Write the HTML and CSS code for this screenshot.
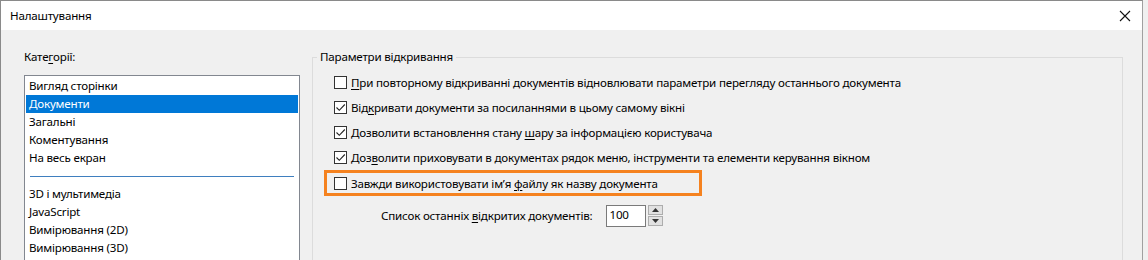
FILE: index.html
```html
<!DOCTYPE html>
<html lang="uk">
<head>
<meta charset="utf-8">
<title>Налаштування</title>
<link rel="stylesheet" href="styles.css">
</head>
<body>
<div class="window">
  <div class="titlebar">
    <span class="title">Налаштування</span>
    <svg class="close" width="12" height="12" viewBox="0 0 12 12"><path d="M1 1 L11 11 M11 1 L1 11" stroke="#111" stroke-width="1.1" fill="none"/></svg>
  </div>
  <div class="content">
    <div class="left">
      <div class="cat-label">Кате<u>г</u>орії:</div>
      <div class="listbox">
        <div class="item">Вигляд сторінки</div>
        <div class="item selected">Документи</div>
        <div class="item">Загальні</div>
        <div class="item">Коментування</div>
        <div class="item">На весь екран</div>
        <div class="sep"></div>
        <div class="item">3D і мультимедіа</div>
        <div class="item">JavaScript</div>
        <div class="item">Вимірювання (2D)</div>
        <div class="item">Вимірювання (3D)</div>
      </div>
    </div>
    <div class="right">
      <fieldset class="group">
        <legend>Параметри відкривання</legend>
        <div class="row"><span class="cb"></span><span><u>П</u>ри повторному відкриванні документів відновлювати параметри перегляду останнього документа</span></div>
        <div class="row"><span class="cb checked"><svg viewBox="0 0 13 13" width="13" height="13"><path d="M2.5 6.5 L5.3 9.3 L10.8 3.5" stroke="#222" stroke-width="1.1" fill="none"/></svg></span><span>Від<u>к</u>ривати документи за посиланнями в цьому самому вікні</span></div>
        <div class="row"><span class="cb checked"><svg viewBox="0 0 13 13" width="13" height="13"><path d="M2.5 6.5 L5.3 9.3 L10.8 3.5" stroke="#222" stroke-width="1.1" fill="none"/></svg></span><span>Дозволити встановлення стану <u>ш</u>ару за інформацією користувача</span></div>
        <div class="row"><span class="cb checked"><svg viewBox="0 0 13 13" width="13" height="13"><path d="M2.5 6.5 L5.3 9.3 L10.8 3.5" stroke="#222" stroke-width="1.1" fill="none"/></svg></span><span>Доз<u>в</u>олити приховувати в документах рядок меню, інструменти та елементи керування вікном</span></div>
        <div class="row highlight"><span class="cb"></span><span>Завжди використовувати ім’я <u>ф</u>айлу як назву документа</span></div>
        <div class="spin-row">
          <span class="spin-label">Список останніх <u>в</u>ідкритих документів:</span>
          <span class="input">100</span>
          <span class="spinner">
            <span class="sbtn"><svg width="7" height="4" viewBox="0 0 7 4"><path d="M0 4 L3.5 0 L7 4 Z" fill="#333"/></svg></span>
            <span class="sbtn"><svg width="7" height="4" viewBox="0 0 7 4"><path d="M0 0 L7 0 L3.5 4 Z" fill="#333"/></svg></span>
          </span>
        </div>
      </fieldset>
    </div>
  </div>
</div>
</body>
</html>
```
FILE: styles.css
```css
html, body {
  margin: 0;
  padding: 0;
  background: #f0f0f0;
}
body {
  font-family: "Noto Sans", "Liberation Sans", sans-serif;
  font-size: 11.6px;
  letter-spacing: -0.2px;
  color: #000;
  width: 1148px;
  height: 260px;
  overflow: hidden;
}
u { text-decoration-thickness: 1px; text-underline-offset: 2px; }
.window {
  width: 1143px;
  height: 260px;
  border-left: 1px solid #8a8a8a;
  border-top: 1px solid #8a8a8a;
  border-right: 1px solid #a0a0a0;
  background: #f0f0f0;
  box-sizing: border-box;
  overflow: hidden;
}
.titlebar {
  height: 29px;
  background: #fff;
  display: flex;
  align-items: center;
  justify-content: space-between;
  padding: 0 11px 0 9px;
}
.close { display: block; }
.content {
  display: flex;
  height: 230px;
  overflow: hidden;
}
.left {
  margin-left: 23px;
  width: 276px;
}
.cat-label {
  margin-top: 19px;
  height: 16px;
  line-height: 16px;
}
.listbox {
  margin-top: 10px;
  border: 1px solid #828790;
  border-bottom: none;
  background: #fff;
  height: 185px;
  box-sizing: border-box;
  padding: 1px 1px 0;
  overflow: hidden;
}
.item {
  height: 18px;
  line-height: 18px;
  padding-left: 3px;
  white-space: nowrap;
}
.item.selected {
  background: #0078d7;
  color: #fff;
}
.sep {
  height: 18px;
  display: flex;
  align-items: center;
  padding: 0 4px;
}
.sep::after {
  content: "";
  flex: 1;
  border-top: 1px solid #3f7fbf;
}
.right {
  margin-left: 12px;
}
.group {
  margin: 19px 0 0 0;
  padding: 5px 0 0 21px;
  width: 811px;
  height: 215px;
  box-sizing: border-box;
  border: 1px solid #dcdcdc;
  border-bottom: none;
}
.group legend {
  padding: 0 3px;
  margin-left: -17px;
  line-height: 16px;
}
.row {
  display: flex;
  align-items: center;
  height: 25px;
  white-space: nowrap;
}
.cb {
  width: 13px;
  height: 13px;
  box-sizing: border-box;
  border: 1px solid #333;
  background: #fff;
  margin-right: 4px;
  flex: none;
  position: relative;
}
.cb svg {
  position: absolute;
  left: -1px;
  top: -1px;
}
.row.highlight {
  margin-left: -10px;
  width: 378px;
  height: 26px;
  box-sizing: border-box;
  border: 3px solid #f5821f;
  padding-left: 7px;
}
.spin-row {
  display: flex;
  align-items: center;
  margin-top: 8px;
  height: 23px;
}
.spin-label {
  margin-left: 47px;
  margin-right: 14px;
}
.input {
  width: 40px;
  height: 22px;
  box-sizing: border-box;
  border: 1px solid #7a7a7a;
  background: #fff;
  padding-left: 2px;
  line-height: 18px;
}
.spinner {
  margin-left: 2px;
  display: flex;
  flex-direction: column;
  gap: 1px;
}
.sbtn {
  width: 15px;
  height: 10px;
  box-sizing: border-box;
  border: 1px solid #adadad;
  background: #e1e1e1;
  display: flex;
  align-items: center;
  justify-content: center;
}
.sbtn svg { display: block; }
```
